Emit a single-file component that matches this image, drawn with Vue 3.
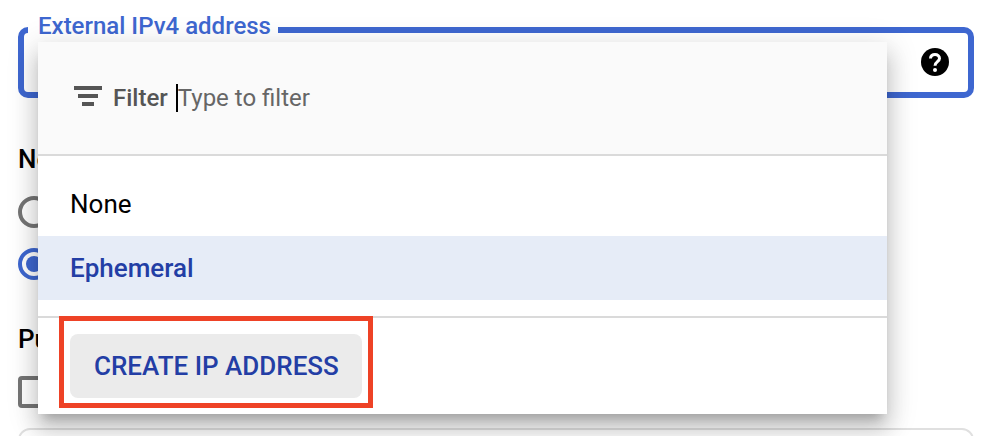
<script setup>
import { ref } from 'vue'

const filter = ref('')
const selected = ref('Ephemeral')
const tier = ref('standard')
const ptr = ref(false)
const options = ['None', 'Ephemeral']
</script>

<template>
  <main class="page">
    <fieldset class="field">
      <legend>External IPv4 address</legend>
      <button type="button" class="help" aria-label="Help">
        <svg viewBox="0 0 28 28" width="28" height="28" aria-hidden="true">
          <circle cx="14" cy="14" r="14" />
          <path class="mark" d="M9.500 10.500C9.500 7.900 11.500 6.500 14 6.500s4.500 1.500 4.500 4c0 3-4.500 3.400-4.500 7.200" />
          <circle class="dot" cx="14" cy="22" r="2" />
        </svg>
      </button>
    </fieldset>

    <section class="group">
      <h2>Network Service Tier</h2>
      <div class="choice"><input v-model="tier" type="radio" name="tier" value="premium" aria-label="Premium" /></div>
      <div class="choice"><input v-model="tier" type="radio" name="tier" value="standard" aria-label="Standard" /></div>
    </section>

    <section class="group ptr">
      <h2>Public DNS PTR Record</h2>
      <div class="choice"><input v-model="ptr" type="checkbox" aria-label="Enable" /></div>
    </section>

    <div class="record"></div>

    <div class="menu">
      <div class="filter">
        <svg viewBox="0 0 28 20" width="28" height="20" aria-hidden="true">
          <path d="M0 0h28v4H0zM4 8h20v4H4zM8 16h12v4H8z" />
        </svg>
        <label for="filter">Filter</label>
        <input id="filter" v-model="filter" type="text" placeholder="Type to filter" />
      </div>
      <ul class="options" role="listbox" aria-label="External IPv4 address">
        <li
          v-for="option in options"
          :key="option"
          role="option"
          :aria-selected="option === selected"
          :class="{ active: option === selected }"
          @click="selected = option"
        >{{ option }}</li>
      </ul>
      <div class="footer">
        <div class="highlight">
          <button type="button" class="create">CREATE IP ADDRESS</button>
        </div>
      </div>
    </div>
  </main>
</template>

<style>
body {
  margin: 0;
  background: #fff;
}
</style>

<style scoped>
* {
  box-sizing: border-box;
}

.page {
  position: relative;
  height: 100vh;
  overflow: hidden;
  padding: 14px 26px 0 18px;
  font-family: Roboto, "Liberation Sans", sans-serif;
  font-size: 26px;
  line-height: 32px;
  color: #000;
}

button,
input {
  font: inherit;
}

.field {
  display: flex;
  justify-content: flex-end;
  min-width: 0;
  margin: 0;
  padding: 2px 19px 16px 4px;
  border: 6px solid #3e67d0;
  border-radius: 10px;
}

.field legend {
  padding: 0 7px 8px 10px;
  font-size: 24px;
  font-weight: 500;
  line-height: 24px;
  color: #3e67d0;
}

.help {
  display: flex;
  padding: 0;
  border: 0;
  background: none;
}

.mark {
  fill: none;
  stroke: #fff;
  stroke-width: 3;
}

.dot {
  fill: #fff;
}

.group {
  margin-top: 45px;
}

.group.ptr {
  margin-top: 43px;
}

h2 {
  margin: 0 0 21px;
  font-size: 26px;
  font-weight: 500;
  line-height: 32px;
}

.choice {
  display: flex;
}

.choice + .choice {
  margin-top: 20px;
}

.choice input {
  display: grid;
  place-items: center;
  width: 32px;
  height: 32px;
  margin: 0;
  border: 4px solid #757575;
  border-radius: 4px;
  appearance: none;
}

.choice input[type="radio"] {
  border-radius: 50%;
}

.choice input[type="radio"]:checked {
  border-color: #3e67d0;
}

.choice input[type="radio"]:checked::before {
  content: "";
  width: 16px;
  height: 16px;
  border-radius: 50%;
  background: #3e67d0;
}

.record {
  height: 64px;
  margin-top: 20px;
  border: 2px solid #e0e0e0;
  border-radius: 12px;
}

.menu {
  position: absolute;
  top: 42px;
  right: 113px;
  left: 38px;
  background: #fff;
  box-shadow:
    0 10px 10px -6px rgba(0, 0, 0, 0.2),
    0 16px 20px 2px rgba(0, 0, 0, 0.14),
    0 6px 28px 4px rgba(0, 0, 0, 0.12);
}

.filter {
  display: flex;
  align-items: center;
  height: 114px;
  padding: 0 32px 0 36px;
  border-bottom: 2px solid #dadada;
  background: #fafafa;
  font-size: 24px;
  color: #555;
}

.filter svg {
  margin-bottom: 4px;
  fill: #555;
}

.filter label {
  margin: 0 8px 0 11px;
  font-weight: 500;
}

.filter input {
  flex: 1;
  min-width: 0;
  height: 28px;
  padding: 0;
  border: 0;
  border-left: 2px solid #000;
  outline: 0;
  background: none;
  color: #000;
}

.filter input::placeholder {
  color: #666;
  opacity: 1;
}

.options {
  margin: 0;
  padding: 16px 0;
  list-style: none;
}

.options li {
  padding: 16px 32px;
}

.options .active {
  background: #e6ecf7;
  font-weight: 500;
  color: #233ea5;
}

.footer {
  display: flex;
  padding: 0 21px 6px;
  border-top: 2px solid #dadada;
}

.highlight {
  margin-top: -2px;
  padding: 13px 6px 5px;
  border: 5px solid #ee4226;
}

.create {
  display: block;
  padding: 16px 23px 16px 24px;
  border: 0;
  border-radius: 8px;
  background: #ebebeb;
  font-weight: 500;
  color: #233ea5;
}
</style>
